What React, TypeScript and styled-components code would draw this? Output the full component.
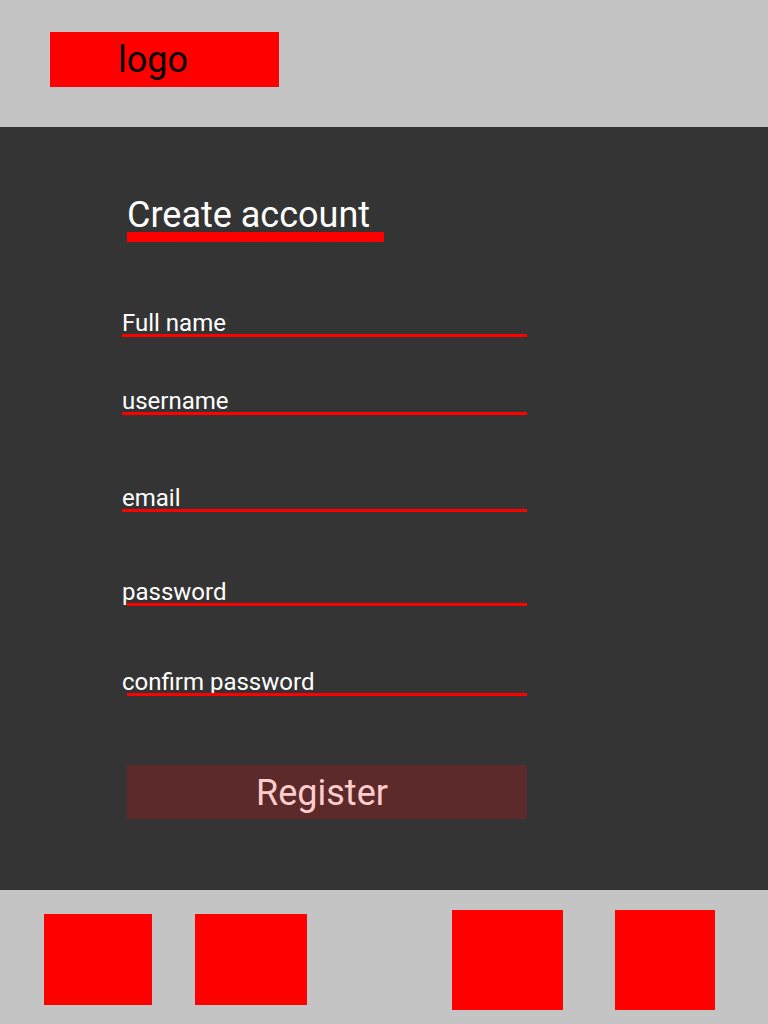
import React from "react";
import styled, { createGlobalStyle } from "styled-components";

const Global = createGlobalStyle`
  html, body { margin: 0; padding: 0; background: #c4c4c4; }
  body { font-family: Roboto, "Liberation Sans", sans-serif; }
  * { box-sizing: border-box; }
`;

const Page = styled.div`
  width: 768px;
  height: 1024px;
  display: flex;
  flex-direction: column;
  overflow: hidden;
`;

const Header = styled.header`
  height: 127px;
  background: #c4c4c4;
  padding: 32px 0 0 50px;
`;

const Logo = styled.div`
  width: 229px;
  height: 55px;
  background: #ff0000;
  color: #000;
  font-size: 36px;
  line-height: 57px;
  padding-left: 68px;
  overflow: hidden;
`;

const Main = styled.main`
  height: 763px;
  background: #343434;
  padding: 70px 0 0 122px;
`;

const Form = styled.form`
  width: 405px;
  display: flex;
  flex-direction: column;
`;

const Title = styled.h1`
  margin: 0 0 0 5px;
  padding-top: 1px;
  width: 257px;
  font-size: 36px;
  line-height: 34px;
  font-weight: 400;
  color: #ffffff;
  white-space: nowrap;
  border-bottom: 10px solid #ff0000;
`;

const Field = styled.div<{ $mt: number }>`
  margin-top: ${(p) => p.$mt}px;
  display: flex;
  flex-direction: column;
`;

const Label = styled.label`
  font-size: 24px;
  line-height: 22px;
  color: #ffffff;
  white-space: nowrap;
`;

const Line = styled.div<{ $inset: number }>`
  height: 3px;
  margin-left: ${(p) => p.$inset}px;
  background: #ff0000;
`;

const Button = styled.button`
  margin: 69px 0 0 5px;
  width: 400px;
  height: 54px;
  border: none;
  background: #5c2a2a;
  color: #ffcccc;
  font-family: Roboto, "Liberation Sans", sans-serif;
  font-size: 36px;
  line-height: 56px;
  padding: 0 10px 0 0;
  cursor: pointer;
`;

const Footer = styled.footer`
  flex: 1;
  background: #c4c4c4;
  display: flex;
  align-items: flex-start;
`;

const Square = styled.div<{ $w: number; $h: number; $mt: number; $ml: number }>`
  width: ${(p) => p.$w}px;
  height: ${(p) => p.$h}px;
  margin-top: ${(p) => p.$mt}px;
  margin-left: ${(p) => p.$ml}px;
  background: #ff0000;
`;

const fields = [
  { label: "Full name", mt: 70, inset: 0 },
  { label: "username", mt: 53, inset: 0 },
  { label: "email", mt: 72, inset: 0 },
  { label: "password", mt: 69, inset: 5 },
  { label: "confirm password", mt: 65, inset: 5 },
];

const squares = [
  { w: 108, h: 91, mt: 24, ml: 44 },
  { w: 112, h: 91, mt: 24, ml: 43 },
  { w: 111, h: 100, mt: 20, ml: 145 },
  { w: 100, h: 100, mt: 20, ml: 52 },
];

export default function App() {
  return (
    <>
      <Global />
      <Page>
        <Header>
          <Logo>logo</Logo>
        </Header>
        <Main>
          <Form onSubmit={(e) => e.preventDefault()}>
            <Title>Create account</Title>
            {fields.map((f) => (
              <Field key={f.label} $mt={f.mt}>
                <Label>{f.label}</Label>
                <Line $inset={f.inset} />
              </Field>
            ))}
            <Button type="submit">Register</Button>
          </Form>
        </Main>
        <Footer>
          {squares.map((s, i) => (
            <Square key={i} $w={s.w} $h={s.h} $mt={s.mt} $ml={s.ml} />
          ))}
        </Footer>
      </Page>
    </>
  );
}
